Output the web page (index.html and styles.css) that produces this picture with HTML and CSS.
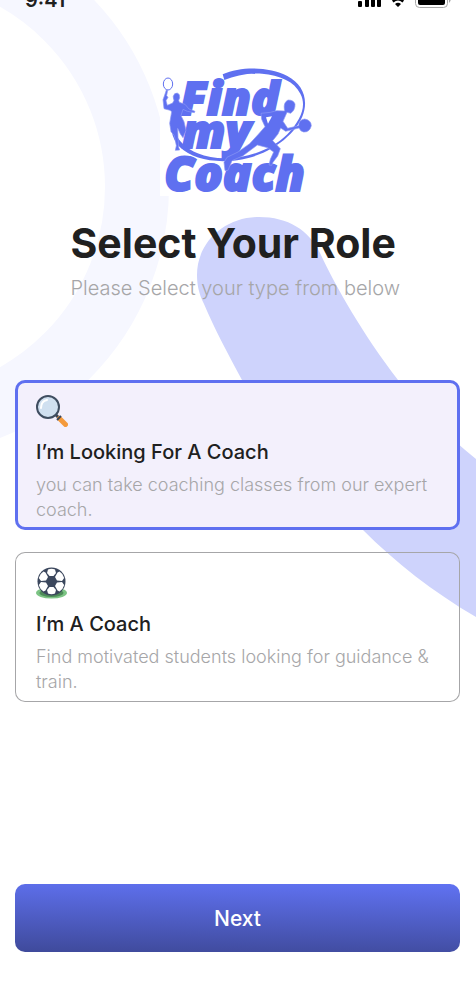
FILE: index.html
```html
<!DOCTYPE html>
<html lang="en">
<head>
<meta charset="utf-8">
<meta name="viewport" content="width=device-width, initial-scale=1">
<title>Find my Coach – Select Your Role</title>
<link rel="stylesheet" href="styles.css">
</head>
<body>
<svg class="backdrop" width="476" height="700" viewBox="0 0 476 700" aria-hidden="true">
  <circle cx="-102" cy="187" r="239" fill="none" stroke="#f6f7ff" stroke-width="64"/>
  <path d="M197 275C197 242 225 217 259 217C288 217 309 230 320 253C336 287 362 333 398 380C418 407 446 435 476 459V617C433 592 395 562 363 530C312 482 270 434 242 380C228 354 214 328 204 304C199 294 197 285 197 275Z" fill="#ced3fc"/>
</svg>
<div class="screen">
  <header class="status">
    <span class="clock">9:41</span>
    <svg class="signals" width="94" height="20" viewBox="0 0 94 20" aria-hidden="true">
      <rect x="0" y="13" width="4" height="6" rx="1"/>
      <rect x="7" y="10" width="4" height="9" rx="1"/>
      <rect x="13" y="7" width="4" height="12" rx="1"/>
      <rect x="19" y="4" width="4" height="15" rx="1"/>
      <path d="M34 12.500Q40 7 46 12.500L44.500 14.500Q40 10.500 35.500 14.500ZM37 16Q40 13.500 43 16L40 19Z"/>
      <rect x="57.500" y="4" width="32" height="15.500" rx="4" fill="none" stroke="#a8a8a8"/>
      <rect x="60" y="6" width="27" height="11" rx="2"/>
      <path d="M91 10Q94 12 91 15Z" fill="#a8a8a8"/>
    </svg>
  </header>

  <main class="content">
    <svg class="logo" width="156" height="134" viewBox="15 6 468 402" role="img" aria-label="Find my Coach">
      <g class="logo-ink">
        <path d="M203 43C258 18 343 19 397 48C438 70 457 107 448 150C436 209 365 272 280 294C196 315 114 300 75 262C61 248 53 231 50 213L62 217C69 244 94 266 128 280C212 315 337 285 397 223C437 181 456 139 436 101C418 64 373 45 321 41C277 38 240 48 208 60Z"/>
        <text class="word" x="76" y="165" font-size="140">Find</text>
        <text class="word" x="82" y="263" font-size="140">my</text>
        <text class="word" x="28" y="393" font-size="142">Coach</text>
        <ellipse cx="39" cy="72" rx="14" ry="18" fill="none" stroke="#5f70f0" stroke-width="3"/>
        <path class="figure" d="M34 90L38 91L35 107L39 112L33 122L37 136L53 129L57 121Q51 109 59 101Q68 96 73 104Q76 113 71 121L73 127L90 133L102 147L120 154L118 158L97 154L84 148L78 167L87 185L93 211L84 233L76 222L68 205L69 231L71 262L74 270L61 271L64 257L58 227L48 215L44 190L50 155L45 151L27 146L24 119L28 108Z"/>
        <path class="figure" d="M388 147Q385 127 399 120Q416 120 420 132Q421 150 407 160L396 157L384 184L398 205L431 197Q431 179 449 177Q468 180 469 197Q464 217 446 216Q435 213 432 204L392 214L377 204L369 222L353 242L376 266L368 288L354 307L350 316L342 315L346 298L356 276L338 263L307 255L263 288L231 302L219 331L210 332L207 307L216 292L249 276L284 251L310 223L330 200L320 178L318 160L346 157L365 152L389 153Z"/>
        <path d="M333 172L351 169L339 191Z" fill="#fff"/>
      </g>
    </svg>

    <div class="intro">
      <h1>Select Your Role</h1>
      <p>Please Select your type from below</p>
    </div>

    <form class="roles" id="role-form">
      <label class="card">
        <input type="radio" name="role" value="player" checked>
        <svg class="icon" width="32" height="32" viewBox="0 0 32 32" aria-hidden="true">
          <path d="M20 20L24 24" stroke="#3a4658" stroke-width="3"/>
          <path d="M23.500 23.500L29.500 29.500" stroke="#f49a3c" stroke-width="5" stroke-linecap="round"/>
          <path d="M21 25L25 21" stroke="#3a4658" stroke-width="2"/>
          <circle cx="12" cy="12" r="11" fill="#d0e0f0" stroke="#3e4d60" stroke-width="2"/>
          <path d="M5 13Q5 6 11 5" fill="none" stroke="#fff" stroke-width="2" stroke-linecap="round"/>
        </svg>
        <span class="title">I’m Looking For A Coach</span>
        <span class="desc">you can take coaching classes from our expert coach.</span>
      </label>
      <label class="card">
        <input type="radio" name="role" value="coach">
        <svg class="icon" width="32" height="32" viewBox="0 0 32 32" aria-hidden="true">
          <ellipse cx="15.500" cy="26" rx="15.500" ry="5.500" fill="#7cc484"/>
          <ellipse cx="15.500" cy="26" rx="12" ry="4" fill="#4e8b59"/>
          <circle cx="15.500" cy="14.500" r="14" fill="#3b475d"/>
          <g fill="#fff">
            <path d="M12 2.500Q15.500 1 19 2.500L20 6L17.500 9H13.500L11 6Z"/>
            <path d="M12 26.500Q15.500 28 19 26.500L20 23L17.500 20H13.500L11 23Z"/>
            <path d="M9.500 5.500L12 10L10 13.500L5 14L2.800 11Q4 6.500 7.500 4.500Z"/>
            <path d="M21.500 5.500L19 10L21 13.500L26 14L28.200 11Q27 6.500 23.500 4.500Z"/>
            <path d="M9.500 23.500L12 19L10 15.500L5 15L2.800 18Q4 22.500 7.500 24.500Z"/>
            <path d="M21.500 23.500L19 19L21 15.500L26 15L28.200 18Q27 22.500 23.500 24.500Z"/>
          </g>
        </svg>
        <span class="title">I’m A Coach</span>
        <span class="desc">Find motivated students looking for guidance &amp; train.</span>
      </label>
    </form>
  </main>

  <button class="next" type="submit" form="role-form">Next</button>
</div>
</body>
</html>
```
FILE: styles.css
```css
* {
  box-sizing: border-box;
}

body {
  margin: 0;
  background: #fff;
  color: #202020;
  font-family: Inter, "Open Sans", sans-serif;
}

.backdrop {
  position: absolute;
  top: 0;
  left: 0;
  z-index: -1;
}

.screen {
  display: flex;
  flex-direction: column;
  min-height: 100vh;
  padding: 0 16px 30px 15px;
}

.status {
  display: flex;
  justify-content: space-between;
  align-items: flex-end;
  height: 8px;
  padding: 0 8px 0 10px;
  overflow: hidden;
}

.clock {
  font-size: 20px;
  font-weight: 600;
  line-height: 20px;
  height: 18px;
}

.signals {
  flex: none;
}

.content {
  display: flex;
  flex-direction: column;
  flex: 1;
}

.logo {
  display: block;
  align-self: center;
  margin-top: 54px;
  background: #fff;
}

.logo-ink {
  fill: #5f70f0;
}

.word {
  font-family: "Open Sans", sans-serif;
  font-style: italic;
  font-weight: 800;
  stroke: #5f70f0;
  stroke-width: 6;
}

.figure {
  stroke: #8d99f5;
  stroke-width: 2;
}

.intro {
  align-self: center;
  min-width: 334px;
  margin-top: 22px;
}

h1 {
  margin: 0;
  font-size: 41px;
  font-weight: 700;
  line-height: 50px;
}

.intro p {
  margin: 6px 0 0;
  color: #a6a6a8;
  font-size: 20px;
  font-weight: 300;
  line-height: 28px;
}

.roles {
  display: flex;
  flex-direction: column;
  gap: 22px;
  margin-top: 78px;
}

.card {
  display: flex;
  flex-direction: column;
  padding: 15px 20px 8px 21px;
  border-radius: 10px;
  box-shadow: inset 0 0 0 1px #a6a6a8;
  cursor: pointer;
}

.card:has(:checked) {
  background: #f3f0fc;
  box-shadow: inset 0 0 0 3px #5f70f0;
}

.card input {
  position: absolute;
  opacity: 0;
}

.icon {
  flex: none;
}

.title {
  margin-top: 11px;
  font-size: 20px;
  font-weight: 500;
  line-height: 28px;
}

.desc {
  margin-top: 6px;
  color: #a6a6a8;
  font-size: 18px;
  font-weight: 300;
  line-height: 25px;
}

.next {
  height: 68px;
  margin-top: 22px;
  border: 0;
  border-radius: 10px;
  background: linear-gradient(181deg, #6072f2, #3f4a9b);
  color: #fff;
  font: 500 21px Inter, "Open Sans", sans-serif;
  cursor: pointer;
}
```
